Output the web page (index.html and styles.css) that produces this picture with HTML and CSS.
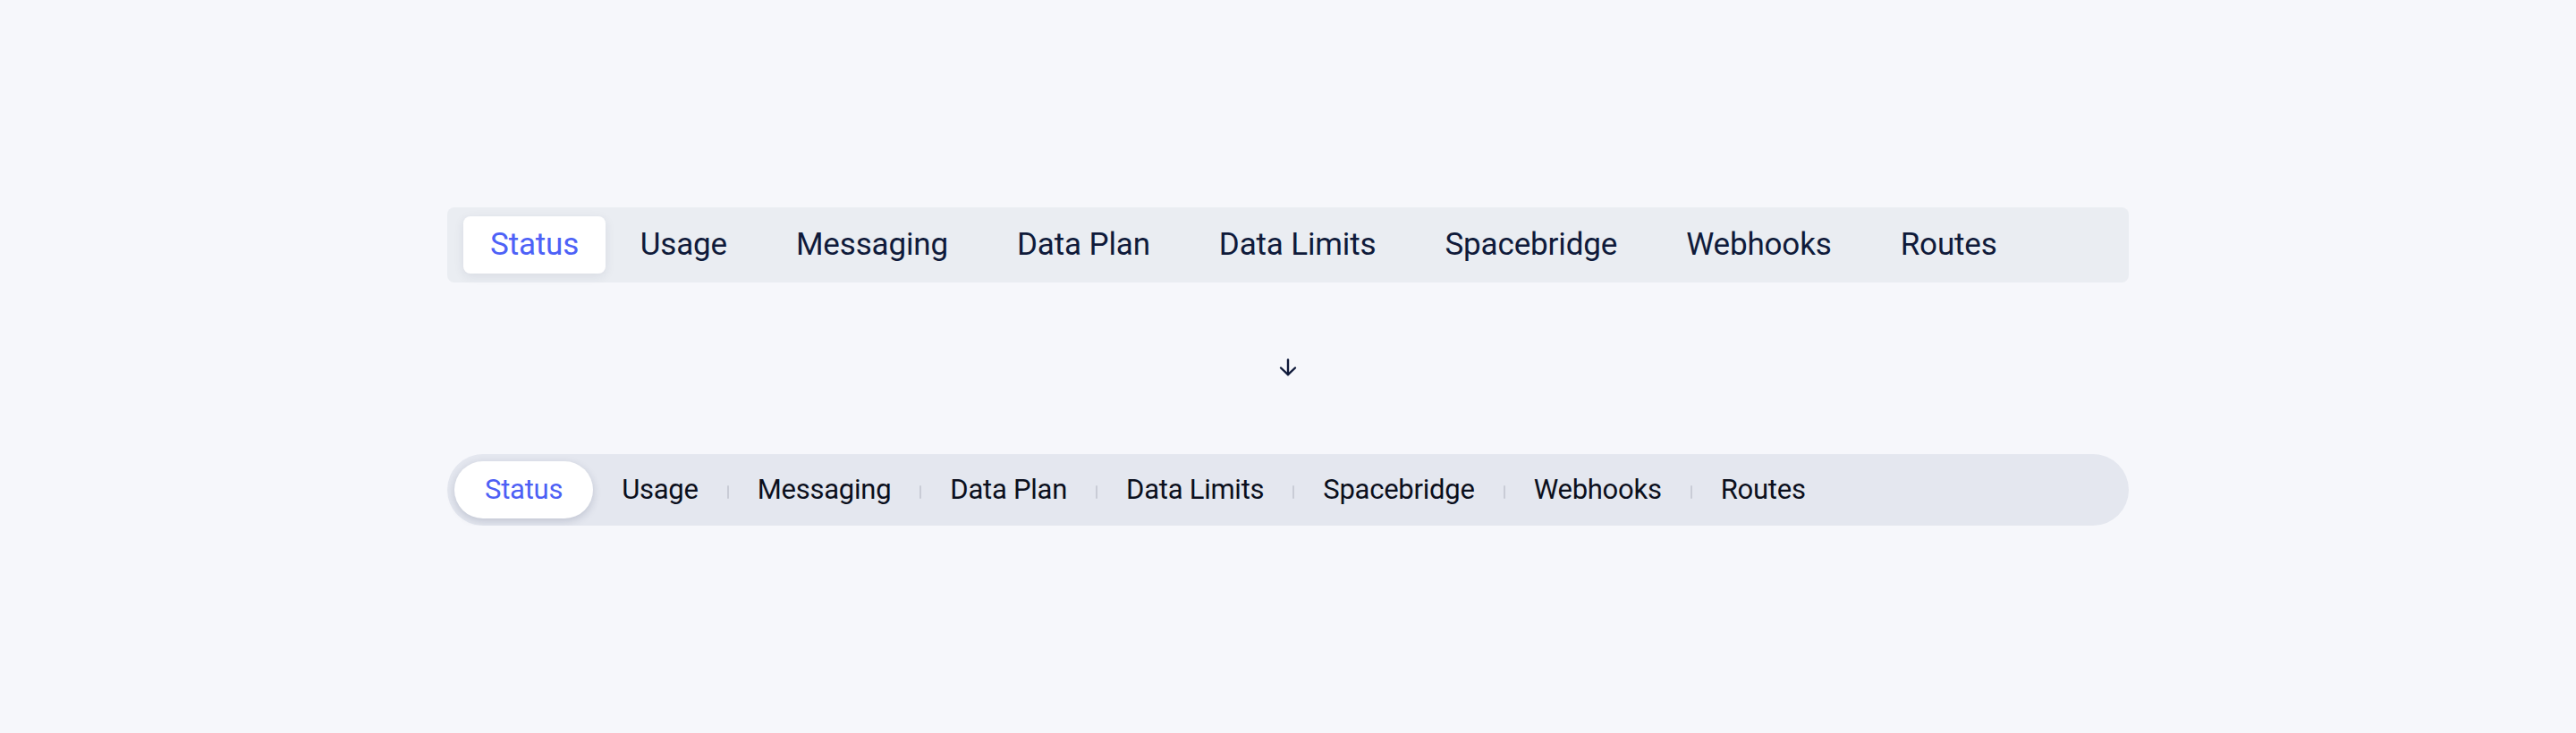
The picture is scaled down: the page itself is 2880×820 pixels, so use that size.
FILE: index.html
```html
<!DOCTYPE html>
<html lang="en">
<head>
<meta charset="utf-8">
<title>Tabs</title>
<link rel="stylesheet" href="styles.css">
</head>
<body>
<main class="stage">
  <nav class="tabs-old">
    <span class="tab-old active">Status</span>
    <span class="tab-old">Usage</span>
    <span class="tab-old">Messaging</span>
    <span class="tab-old">Data Plan</span>
    <span class="tab-old">Data Limits</span>
    <span class="tab-old">Spacebridge</span>
    <span class="tab-old">Webhooks</span>
    <span class="tab-old">Routes</span>
  </nav>
  <div class="arrow-row">
    <svg class="arrow" width="20" height="20" viewBox="0 0 20 20" fill="none" stroke="#0f1a3a" stroke-width="2.4" stroke-linecap="round" stroke-linejoin="round">
      <path d="M10 1.5 V18"/>
      <path d="M2 10.5 L10 18.2 L18 10.5"/>
    </svg>
  </div>
  <nav class="tabs-new">
    <span class="tab-new active">Status</span>
    <span class="tab-new">Usage</span>
    <span class="sep"></span>
    <span class="tab-new">Messaging</span>
    <span class="sep"></span>
    <span class="tab-new">Data Plan</span>
    <span class="sep"></span>
    <span class="tab-new">Data Limits</span>
    <span class="sep"></span>
    <span class="tab-new">Spacebridge</span>
    <span class="sep"></span>
    <span class="tab-new">Webhooks</span>
    <span class="sep"></span>
    <span class="tab-new">Routes</span>
  </nav>
</main>
</body>
</html>
```
FILE: styles.css
```css
html, body {
  margin: 0;
  padding: 0;
  background: #f6f7fb;
}
body {
  font-family: Roboto, "Noto Sans", sans-serif;
}
.stage {
  display: flex;
  flex-direction: column;
  align-items: center;
  padding-top: 232px;
}
.tabs-old {
  box-sizing: border-box;
  width: 1880px;
  height: 84px;
  padding: 10px 18px;
  display: flex;
  align-items: center;
  background: #eaedf2;
  border-radius: 8px;
}
.tab-old {
  height: 64px;
  line-height: 64px;
  padding: 0 38.5px;
  font-size: 35px;
  letter-spacing: -0.15px;
  color: #0f1a3a;
  white-space: nowrap;
}
.tab-old.active {
  padding: 0 30px;
  background: #ffffff;
  border-radius: 8px;
  color: #4d61f7;
  box-shadow: 0 3px 12px rgba(30, 40, 80, 0.09);
}
.arrow-row {
  height: 192px;
  display: flex;
  align-items: center;
  justify-content: center;
}
.arrow {
  display: block;
  margin-top: -2px;
}
.tabs-new {
  box-sizing: border-box;
  width: 1880px;
  height: 80px;
  padding: 8px;
  display: flex;
  align-items: center;
  background: #e4e7ef;
  border-radius: 40px;
}
.tab-new {
  height: 64px;
  line-height: 64px;
  padding: 0 32px;
  font-size: 31px;
  letter-spacing: -0.25px;
  color: #0b0f1c;
  white-space: nowrap;
}
.tab-new.active {
  padding: 0 34px;
  background: #ffffff;
  border-radius: 32px;
  color: #4d5ff5;
  box-shadow: 0 3px 10px rgba(30, 40, 80, 0.18);
}
.sep {
  width: 2px;
  height: 15px;
  margin-top: 4px;
  background: #c9ccd6;
  border-radius: 1px;
}
```
